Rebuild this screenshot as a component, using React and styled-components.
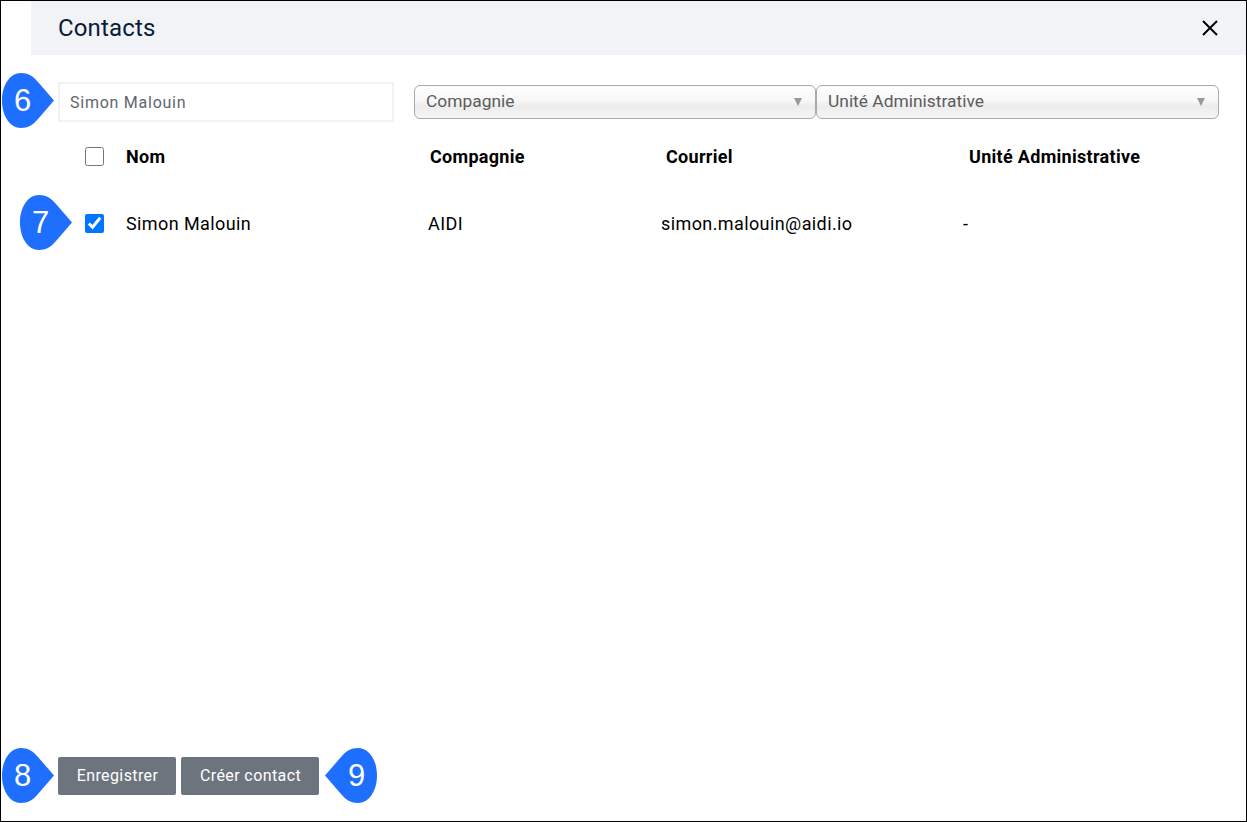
import styled, { createGlobalStyle } from "styled-components";

const GlobalStyle = createGlobalStyle`
  * {
    box-sizing: border-box;
  }
  html, body {
    margin: 0;
    padding: 0;
    background: #fff;
  }
  body {
    font-family: Roboto, "Liberation Sans", sans-serif;
  }
`;

const Frame = styled.div`
  position: relative;
  width: 1247px;
  height: 822px;
  border: 1px solid #000;
  background: #fff;
  display: flex;
  flex-direction: column;
  overflow: hidden;
`;

const Header = styled.header`
  height: 54px;
  margin-left: 30px;
  padding: 0 27px;
  background: #f2f3f7;
  display: flex;
  align-items: center;
  justify-content: space-between;
`;

const Title = styled.h1`
  margin: 0;
  color: #0b1b3a;
  font-size: 24px;
  font-weight: 400;
  letter-spacing: 0.15px;
`;

const CloseButton = styled.button`
  width: 18px;
  height: 18px;
  padding: 0;
  border: 0;
  background: none;
  display: flex;
  svg {
    display: block;
  }
`;

const Filters = styled.div`
  display: flex;
  align-items: center;
  margin-top: 27px;
  padding-left: 57px;
`;

const SearchInput = styled.input`
  width: 336px;
  height: 40px;
  padding: 0 10px;
  margin-right: 20px;
  border: 2px solid #f2f2f2;
  outline: none;
  color: #5f666d;
  font-family: inherit;
  font-size: 16px;
  letter-spacing: 0.75px;
`;

const Select = styled.div`
  position: relative;
  width: ${(p) => p.$width}px;
  height: 34px;
  padding: 0 11px;
  border: 1px solid #a9a9a9;
  border-radius: 6px;
  background: linear-gradient(#fefefe 0%, #f8f8f8 45%, #ececec 62%, #f6f6f6 100%);
  color: #5c5c5c;
  font-size: 17.4px;
  line-height: 30px;
  &::after {
    content: "";
    position: absolute;
    right: 13px;
    top: 12px;
    border-left: 4.5px solid transparent;
    border-right: 4.5px solid transparent;
    border-top: 8px solid #999;
  }
`;

const Row = styled.div`
  display: grid;
  grid-template-columns: 41px ${(p) => p.$columns};
  align-items: center;
  padding-left: 84px;
  color: #000;
  font-size: 18px;
  letter-spacing: ${(p) => (p.$head ? 0.3 : 0.4)}px;
  font-weight: ${(p) => (p.$head ? 700 : 400)};
  margin-top: ${(p) => p.$top}px;
  height: 24px;
`;

const Check = styled.input.attrs({ type: "checkbox" })`
  width: 19px;
  height: 19px;
  margin: 0;
  accent-color: #0075ff;
`;

const Footer = styled.footer`
  margin-top: auto;
  padding: 0 0 26px 57px;
  display: flex;
  gap: 5px;
`;

const Button = styled.button`
  height: 38px;
  width: ${(p) => p.$width}px;
  padding: 0 0 2px 1px;
  border: 0;
  border-radius: 2px;
  background: #6c757d;
  color: #fff;
  font-family: inherit;
  font-size: 16px;
  font-weight: 400;
  letter-spacing: 0.4px;
`;

const Callout = styled.div`
  position: absolute;
  left: ${(p) => p.$x}px;
  top: ${(p) => p.$y}px;
  width: 52px;
  height: 55px;
  svg {
    position: absolute;
    inset: 0;
  }
`;

const CalloutNumber = styled.span`
  position: absolute;
  left: ${(p) => (p.$flip ? 13 : 2)}px;
  top: 0;
  width: 37px;
  height: 55px;
  line-height: 56px;
  text-align: center;
  color: #fff;
  font-family: "Liberation Sans", sans-serif;
  font-size: 31px;
`;

function Badge({ n, x, y, flip }) {
  return (
    <Callout $x={x} $y={y}>
      <svg width="52" height="55" viewBox="0 0 52 55">
        <path
          transform={flip ? "translate(52 0) scale(-1 1)" : undefined}
          d="M19 0 C26 0 31 3 36 9 L52 27.5 L36 46 C31 52 26 55 19 55 C8 55 0 43 0 27.5 C0 12 8 0 19 0 Z"
          fill="#1f6fff"
        />
      </svg>
      <CalloutNumber $flip={flip}>{n}</CalloutNumber>
    </Callout>
  );
}

export default function App() {
  return (
    <>
      <GlobalStyle />
      <Frame>
        <Header>
          <Title>Contacts</Title>
          <CloseButton aria-label="Fermer">
            <svg width="18" height="18" viewBox="0 0 18 18">
              <path d="M2 2 L16 16 M16 2 L2 16" stroke="#000" strokeWidth="2" />
            </svg>
          </CloseButton>
        </Header>

        <Filters>
          <SearchInput defaultValue="Simon Malouin" />
          <Select $width={402}>Compagnie</Select>
          <Select $width={403}>Unité Administrative</Select>
        </Filters>

        <Row $head $top={22} $columns="304px 236px 303px 1fr">
          <Check />
          <span>Nom</span>
          <span>Compagnie</span>
          <span>Courriel</span>
          <span>Unité Administrative</span>
        </Row>

        <Row $top={43} $columns="302px 233px 302px 1fr">
          <Check defaultChecked />
          <span>Simon Malouin</span>
          <span>AIDI</span>
          <span>simon.malouin@aidi.io</span>
          <span>-</span>
        </Row>

        <Footer>
          <Button $width={118}>Enregistrer</Button>
          <Button $width={138}>Créer contact</Button>
        </Footer>

        <Badge n="6" x={1} y={72} />
        <Badge n="7" x={19} y={194} />
        <Badge n="8" x={1} y={747} />
        <Badge n="9" x={324} y={747} flip />
      </Frame>
    </>
  );
}
